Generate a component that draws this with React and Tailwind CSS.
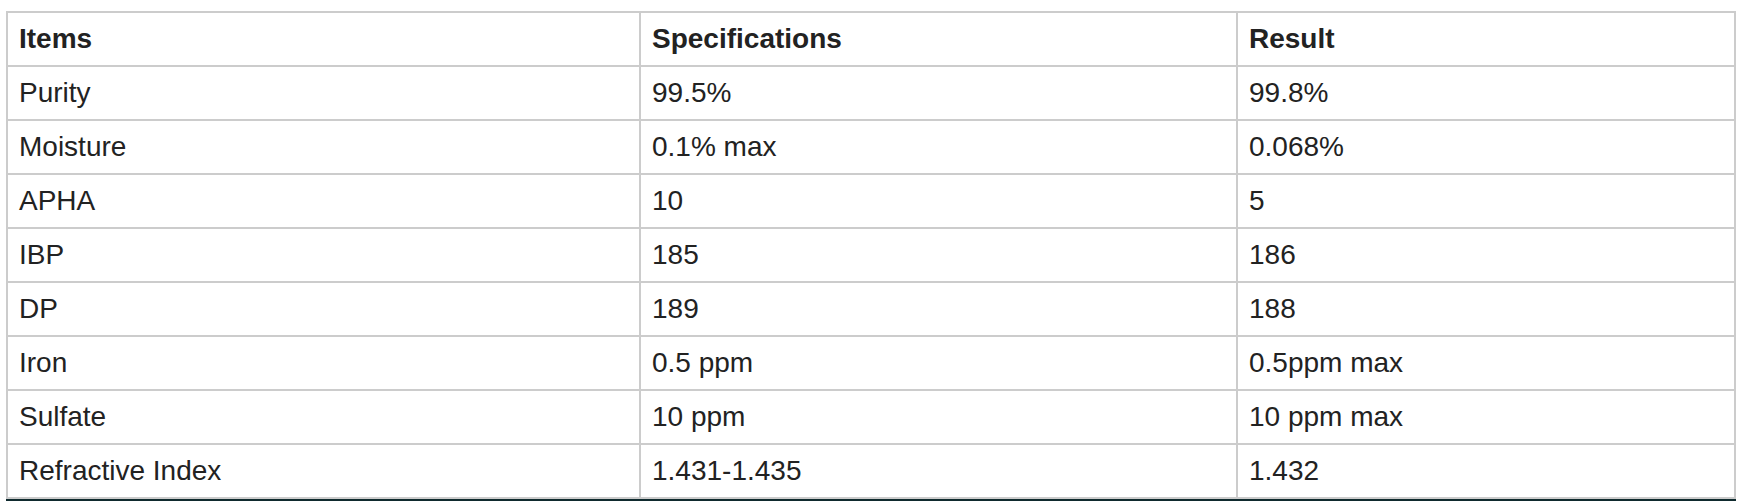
const rows = [
  ['Purity', '99.5%', '99.8%'],
  ['Moisture', '0.1% max', '0.068%'],
  ['APHA', '10', '5'],
  ['IBP', '185', '186'],
  ['DP', '189', '188'],
  ['Iron', '0.5 ppm', '0.5ppm max'],
  ['Sulfate', '10 ppm', '10 ppm max'],
  ['Refractive Index', '1.431-1.435', '1.432'],
]

export default function App() {
  return (
    <div className="w-[1739px] h-[501px] bg-white overflow-hidden font-['Liberation_Sans',Arial,sans-serif] text-[#222]">
      <div className="pt-[11px] pl-[6px]">
        <table className="w-[1730px] table-fixed border-collapse text-[28px]">
          <colgroup>
            <col className="w-[633px]" />
            <col className="w-[597px]" />
            <col className="w-[498px]" />
          </colgroup>
          <thead>
            <tr className="h-[54px]">
              <th className="border-2 border-[#ccc] pl-[11px] py-0 text-left font-bold">Items</th>
              <th className="border-2 border-[#ccc] pl-[11px] py-0 text-left font-bold">Specifications</th>
              <th className="border-2 border-[#ccc] pl-[11px] py-0 text-left font-bold">Result</th>
            </tr>
          </thead>
          <tbody>
            {rows.map((r) => (
              <tr key={r[0]} className="h-[54px]">
                {r.map((c, i) => (
                  <td key={i} className="border-2 border-[#ccc] pl-[11px] py-0">
                    {c}
                  </td>
                ))}
              </tr>
            ))}
          </tbody>
        </table>
      </div>
      <div className="ml-[6px] w-[1730px] h-[4px] bg-[#0f2a2e]" />
    </div>
  )
}
